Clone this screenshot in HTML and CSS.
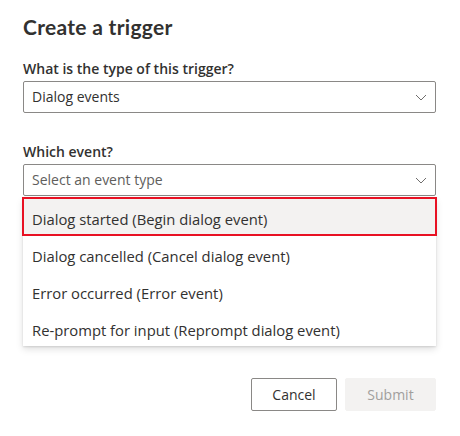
FILE: index.html
```html
<!DOCTYPE html>
<html lang="en">
<head>
  <meta charset="UTF-8" />
  <title>Create a trigger</title>
  <meta name="viewport" content="width=device-width, initial-scale=1.0" />
  <link rel="stylesheet" href="styles.css">
</head>
<body>
  <div class="dialog">
    <h1 class="dialog-title">Create a trigger</h1>

    <!-- Trigger type -->
    <label class="field-label">What is the type of this trigger?</label>
    <div class="dropdown">
      <span class="dropdown-text">Dialog events</span>
      <svg class="chevron" width="12" height="12" viewBox="0 0 12 12"><path d="M1 4 L6 9 L11 4" fill="none" stroke="#605e5c" stroke-width="0.9"/></svg>
    </div>

    <!-- Event -->
    <label class="field-label second">Which event?</label>
    <div class="dropdown-wrap">
      <div class="dropdown">
        <span class="dropdown-text placeholder">Select an event type</span>
        <svg class="chevron" width="12" height="12" viewBox="0 0 12 12"><path d="M1 4 L6 9 L11 4" fill="none" stroke="#605e5c" stroke-width="0.9"/></svg>
      </div>
      <div class="menu">
        <div class="menu-item selected">Dialog started (Begin dialog event)</div>
        <div class="menu-item">Dialog cancelled (Cancel dialog event)</div>
        <div class="menu-item">Error occurred (Error event)</div>
        <div class="menu-item">Re-prompt for input (Reprompt dialog event)</div>
      </div>
    </div>

    <div class="footer">
      <button class="btn btn-default">Cancel</button>
      <button class="btn btn-disabled" disabled>Submit</button>
    </div>
  </div>
</body>
</html>
```

FILE: styles.css
```css
* {
  box-sizing: border-box;
}

body {
  font-family: 'Segoe UI', 'Open Sans', sans-serif;
  background: #fff;
  color: #323130;
  margin: 0;
  padding: 0;
}

.dialog {
  width: 460px;
  padding: 12px 24px 0 23px;
  display: flex;
  flex-direction: column;
}

.dialog-title {
  margin: 0;
  font-family: 'Segoe UI', Lato, sans-serif;
  font-size: 21px;
  line-height: 29px;
  font-weight: 700;
  letter-spacing: 0.3px;
  color: #323130;
}

.field-label {
  display: block;
  margin-top: 10px;
  padding: 8px 0 2px;
  font-size: 14px;
  line-height: 20px;
  font-weight: 600;
}

.field-label.second {
  margin-top: 21px;
}

.dropdown-wrap {
  position: relative;
}

.dropdown {
  height: 32px;
  border: 1px solid #8a8886;
  border-radius: 2px;
  padding: 0 8px;
  display: flex;
  align-items: center;
  justify-content: space-between;
  font-size: 14px;
}

.dropdown-text {
  line-height: 30px;
}

.placeholder {
  color: #605e5c;
}

.chevron {
  flex: none;
}

.menu {
  position: absolute;
  top: 34px;
  left: 0;
  right: 0;
  background: #fff;
  box-shadow: 0 3.2px 7.2px rgba(0, 0, 0, 0.132), 0 0.6px 1.8px rgba(0, 0, 0, 0.108);
  z-index: 2;
}

.menu-item {
  height: 37px;
  padding: 4px 9px 0;
  display: flex;
  align-items: center;
  font-size: 14.8px;
  color: #323130;
}

.menu-item.selected {
  background: #f3f2f1;
  outline: 2px solid #e81123;
  outline-offset: -1px;
}

.footer {
  margin-top: 182px;
  display: flex;
  justify-content: flex-end;
  gap: 8px;
}

.btn {
  height: 33px;
  min-width: 80px;
  padding: 0 16px;
  border-radius: 2px;
  font-family: inherit;
  font-size: 14px;
  font-weight: 500;
}

.btn-default {
  width: 86px;
  background: #fff;
  border: 1px solid #8a8886;
  color: #323130;
}

.btn-disabled {
  width: 91px;
  background: #f3f2f1;
  border: 1px solid #f3f2f1;
  color: #a19f9d;
}
```
